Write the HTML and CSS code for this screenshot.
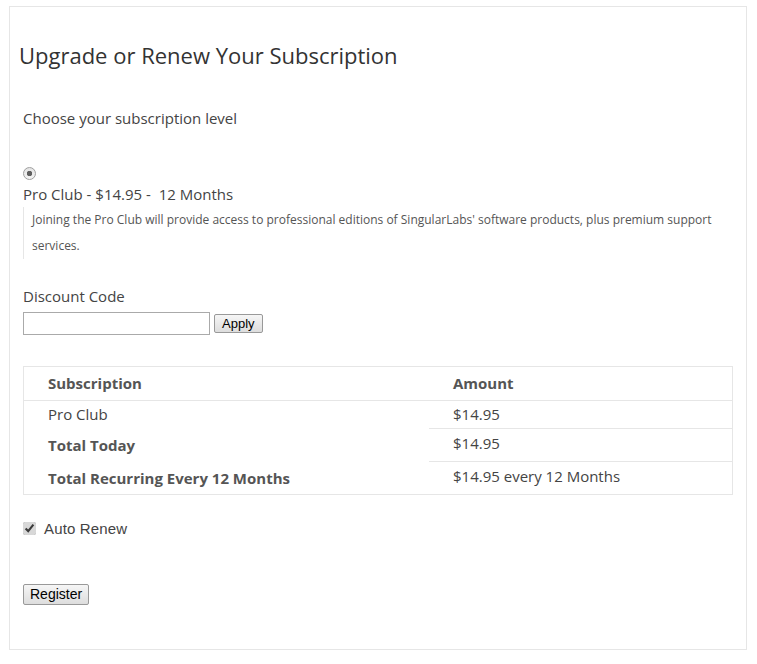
FILE: index.html
```html
<!DOCTYPE html>
<html lang="en">
<head>
    <meta charset="UTF-8">
    <title>Upgrade or Renew Your Subscription</title>
    <link rel="stylesheet" href="styles.css">
</head>
<body>
    <div class="page">
        <h1>Upgrade or Renew Your Subscription</h1>
        <form class="checkout">
            <p class="intro">Choose your subscription level</p>

            <div class="level">
                <input type="radio" name="level" class="radio" checked>
                <div class="level-name">Pro Club - $14.95 -&nbsp; 12 Months</div>
                <div class="level-desc">Joining the Pro Club will provide access to professional editions of SingularLabs' software products, plus premium support services.</div>
            </div>

            <div class="discount">
                <label for="discount_code">Discount Code</label>
                <div class="discount-row">
                    <input type="text" id="discount_code" class="code-input">
                    <button type="button" class="btn">Apply</button>
                </div>
            </div>

            <table class="summary">
                <tr class="head">
                    <th>Subscription</th>
                    <th>Amount</th>
                </tr>
                <tr class="line">
                    <td>Pro Club</td>
                    <td>$14.95</td>
                </tr>
                <tr class="total total-today">
                    <th>Total Today</th>
                    <td class="amount">$14.95</td>
                </tr>
                <tr class="total total-recurring">
                    <th>Total Recurring Every 12 Months</th>
                    <td class="amount">$14.95 every 12 Months</td>
                </tr>
            </table>

            <label class="renew"><input type="checkbox" checked> Auto Renew</label>

            <button type="submit" class="btn btn-register">Register</button>
        </form>
    </div>
</body>
</html>
```

FILE: styles.css
```css
body {
    margin: 0;
    padding: 6px 10px 0 9px;
    font-family: "Open Sans", "Liberation Sans", sans-serif;
    color: #444;
    background-color: #fff;
}
.page {
    width: 736px;
    height: 642px;
    border: 1px solid #e6e6e6;
    box-sizing: content-box;
}
h1 {
    margin: 33px 0 0 9px;
    font-size: 22px;
    font-weight: normal;
    line-height: 30px;
    color: #333;
}
.checkout {
    margin-left: 13px;
    width: 710px;
}
.intro {
    margin: 38px 0 0 0;
    font-size: 15px;
    line-height: 20px;
}
.level {
    margin-top: 39px;
}
.radio {
    appearance: none;
    display: block;
    margin: 0;
    width: 13px;
    height: 13px;
    border: 1px solid #a0a0a0;
    border-radius: 50%;
    background: radial-gradient(circle, #606060 0 2.5px, transparent 3px), linear-gradient(#e4e4e4, #f4f4f4);
    box-sizing: border-box;
}
.level-name {
    margin-top: 4px;
    font-size: 15px;
    line-height: 20px;
}
.level-desc {
    margin-top: 3px;
    padding: 0 10px 0 8px;
    border-left: 1px solid #e6e6e6;
    font-size: 12px;
    line-height: 26px;
    color: #555;
}
.discount {
    margin-top: 27px;
}
.discount label {
    display: block;
    font-size: 15px;
    line-height: 20px;
}
.discount-row {
    display: flex;
    align-items: center;
    gap: 4px;
    margin-top: 6px;
}
.code-input {
    width: 187px;
    height: 23px;
    box-sizing: border-box;
    margin: 0;
    border: 1px solid #aaa;
    padding: 2px 4px;
}
.btn {
    font-family: "Liberation Sans", Arial, sans-serif;
    font-size: 13px;
    color: #000;
    background: linear-gradient(#f6f6f6, #dddddd);
    border: 1px solid #999;
    border-radius: 2px;
    height: 19px;
    padding: 0 7px;
    margin: 0;
    line-height: 17px;
}
.summary {
    margin-top: 31px;
    width: 710px;
    border-collapse: collapse;
    border: 1px solid #e6e6e6;
    font-size: 15px;
}
.summary th,
.summary td {
    text-align: left;
    padding: 0 0 0 24px;
}
.summary th {
    font-weight: bold;
    color: #555;
}
.summary .head th {
    height: 32px;
    padding-bottom: 1px;
    border-bottom: 1px solid #e6e6e6;
}
.summary .head th:first-child {
    width: 381px;
}
.summary .line td {
    height: 26px;
    padding-bottom: 1px;
}
.summary .total-today th {
    height: 33px;
}
.summary .total-recurring th {
    height: 32px;
}
.summary .total td.amount {
    border-top: 1px solid #e6e6e6;
    padding-bottom: 4px;
}
.renew {
    display: flex;
    align-items: center;
    gap: 8px;
    margin-top: 27px;
    font-family: "Liberation Sans", Arial, sans-serif;
    font-size: 15px;
    letter-spacing: 0.15px;
    line-height: 13px;
}
.renew input {
    margin: 0;
    width: 13px;
    height: 13px;
    accent-color: #d8d8d8;
}
.btn-register {
    display: block;
    margin-top: 49px;
    height: 21px;
    font-size: 14px;
    padding: 0 6px;
}
```
